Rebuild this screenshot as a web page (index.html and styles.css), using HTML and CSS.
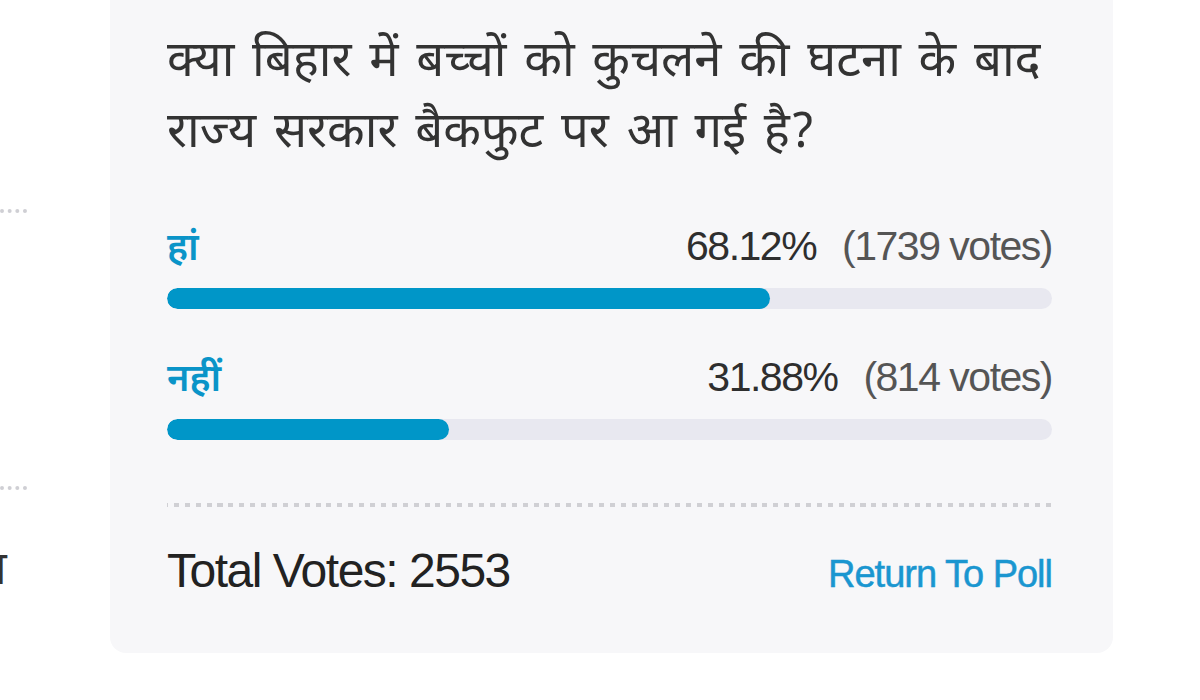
FILE: index.html
```html
<!DOCTYPE html>
<html lang="hi">
<head>
<meta charset="utf-8">
<title>पोल परिणाम</title>
<link rel="stylesheet" href="styles.css">
</head>
<body>
<div class="page">
  <aside class="side">
    <div class="side-item"></div>
    <div class="side-item"></div>
    <div class="side-item side-item--text"><span class="side-text">खबरा</span></div>
  </aside>
  <section class="poll">
    <h2 class="poll-question">क्या बिहार में बच्चों को कुचलने की घटना के बाद राज्य सरकार बैकफुट पर आ गई है?</h2>
    <ul class="poll-results">
      <li class="poll-option">
        <div class="poll-option-head">
          <span class="poll-label">हां</span>
          <span class="poll-stats"><span class="poll-pct">68.12%</span><span class="poll-votes">(1739 votes)</span></span>
        </div>
        <div class="poll-bar"><div class="poll-fill" style="width:68.12%"></div></div>
      </li>
      <li class="poll-option">
        <div class="poll-option-head">
          <span class="poll-label">नहीं</span>
          <span class="poll-stats"><span class="poll-pct">31.88%</span><span class="poll-votes">(814 votes)</span></span>
        </div>
        <div class="poll-bar"><div class="poll-fill" style="width:31.88%"></div></div>
      </li>
    </ul>
    <div class="poll-footer">
      <span class="poll-total">Total Votes: 2553</span>
      <a class="poll-return" href="#">Return To Poll</a>
    </div>
  </section>
</div>
</body>
</html>
```

FILE: styles.css
```css
html, body {
  margin: 0;
  padding: 0;
  background: #ffffff;
  overflow: hidden;
}

body {
  font-family: "Liberation Sans", Arial, sans-serif;
  color: #333;
}

.page {
  display: flex;
  width: 1200px;
  height: 700px;
  overflow: hidden;
}

/* neighbouring column, only its edge is visible */
.side {
  width: 110px;
  flex: none;
  display: flex;
  flex-direction: column;
  overflow: hidden;
}

.side-item {
  height: 209px;
  width: 27px;
  border-bottom: 4px dotted #cfcfd4;
  flex: none;
}

.side-item + .side-item {
  height: 273px;
}

.side-item--text {
  border: 0;
  height: auto;
  width: auto;
  padding-top: 60px;
  margin-left: -88px;
  white-space: nowrap;
}

.side-text {
  font-family: "Noto Sans Devanagari", "Lohit Devanagari", "Noto Sans", sans-serif;
  font-size: 46px;
  color: #333;
  line-height: 1;
}

.poll {
  width: 1003px;
  flex: none;
  box-sizing: border-box;
  margin-top: -30px;
  height: 683px;
  padding: 59px 61px 0 57px;
  background: #f7f7f9;
  border-radius: 16px;
}

.poll-question {
  margin: 0;
  font-family: "Noto Sans Devanagari", "Lohit Devanagari", "Noto Sans", sans-serif;
  font-weight: 400;
  font-size: 49px;
  line-height: 71px;
  word-spacing: 5px;
  color: #333;
}

.poll-results {
  list-style: none;
  margin: 52px 0 0;
  padding: 0;
  display: flex;
  flex-direction: column;
  gap: 45px;
}

.poll-option-head {
  display: flex;
  justify-content: space-between;
  align-items: baseline;
  height: 65px;
}

.poll-label {
  font-family: "Noto Sans Devanagari", "Lohit Devanagari", "Noto Sans", sans-serif;
  font-size: 38px;
  font-weight: 600;
  color: #0a94c8;
}

.poll-stats {
  font-size: 41px;
  letter-spacing: -1.5px;
}

.poll-pct {
  color: #2e2e2e;
}

.poll-votes {
  color: #555;
  margin-left: 26px;
}

.poll-bar {
  height: 21px;
  border-radius: 11px;
  background: #e8e8f0;
  overflow: hidden;
}

.poll-fill {
  height: 100%;
  background: #0096c8;
  border-radius: 11px;
}

.poll-footer {
  margin-top: 63px;
  padding-top: 36px;
  border-top: 4px solid transparent;
  border-image: repeating-linear-gradient(90deg, #d0d0d4 0 5px, transparent 5px 10.8px) 4;
  display: flex;
  justify-content: space-between;
  align-items: baseline;
}

.poll-total {
  font-size: 48px;
  color: #222;
  letter-spacing: -1.5px;
}

.poll-return {
  font-size: 38px;
  color: #1a96d0;
  text-decoration: none;
  letter-spacing: -1px;
  -webkit-text-stroke: 0.5px #1a96d0;
}
```
